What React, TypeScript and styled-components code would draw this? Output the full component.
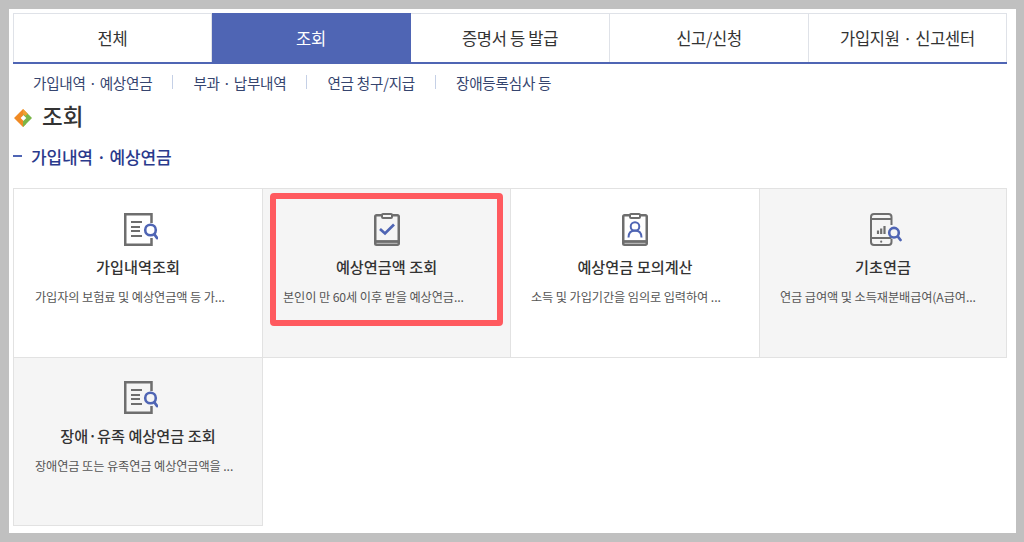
import React from "react";
import styled, { createGlobalStyle } from "styled-components";

const Global = createGlobalStyle`
  html, body { margin: 0; padding: 0; background: #fff; }
  body { font-family: "Noto Sans CJK KR", "Noto Sans", sans-serif; }
  * { box-sizing: border-box; }
`;

const Frame = styled.div`
  width: 1024px;
  height: 542px;
  border-style: solid;
  border-color: #c0c0c0;
  border-width: 9px 8px 9px 9px;
  background: #fff;
  padding: 4px 9px 0 4px;
  overflow: hidden;
  position: relative;
`;

const Tabs = styled.nav`
  display: grid;
  grid-template-columns: 199px 199px 199px 199px 198px;
  height: 51px;
  border-bottom: 2px solid #4f65b4;
`;

const Tab = styled.div<{ $active?: boolean; $first?: boolean }>`
  display: flex;
  align-items: center;
  justify-content: center;
  font-size: 16.5px;
  letter-spacing: -0.3px;
  color: ${(p) => (p.$active ? "#fff" : "#333")};
  background: ${(p) => (p.$active ? "#4f65b4" : "#fff")};
  border: 1px solid ${(p) => (p.$active ? "#4f65b4" : "#dfe2e8")};
  border-bottom: none;
  border-left-width: ${(p) => (p.$first ? 1 : 0)}px;
`;

const SubNav = styled.ul`
  display: flex;
  align-items: center;
  list-style: none;
  margin: 0;
  padding: 0 0 0 20px;
  height: 36px;
`;

const SubItem = styled.li`
  font-size: 14.6px;
  letter-spacing: -0.25px;
  color: #36456f;
  display: flex;
  align-items: center;
  white-space: nowrap;
  & + &::before {
    content: "";
    width: 1px;
    height: 14px;
    background: #c5d0e6;
    margin: 0 20px;
  }
`;

const Title = styled.h1`
  display: flex;
  align-items: center;
  gap: 10px;
  margin: 2px 0 0;
  padding-left: 1px;
  height: 27px;
  font-size: 22.5px;
  font-weight: 500;
  color: #333;
  line-height: 1;
`;

const DiamondSvg = styled.svg`
  margin-top: 5px;
`;

const Section = styled.h2`
  display: flex;
  align-items: center;
  gap: 9px;
  margin: 12px 0 0;
  height: 30px;
  font-size: 17px;
  font-weight: 500;
  letter-spacing: -0.2px;
  color: #2a3a8c;
  &::before {
    content: "";
    width: 9px;
    height: 2px;
    background: #4f65b4;
  }
`;

const Grid = styled.div`
  display: grid;
  grid-template-columns: 249px 248px 249px 247px;
  grid-auto-rows: 168.5px;
  width: 994px;
  margin-top: 17px;
  border-top: 1px solid #e2e2e2;
  border-left: 1px solid #e2e2e2;
`;

const Card = styled.article<{ $shaded?: boolean }>`
  display: flex;
  flex-direction: column;
  align-items: center;
  padding: 22px 0 0;
  background: ${(p) => (p.$shaded ? "#f5f5f5" : "#fff")};
  border-right: 1px solid #e2e2e2;
  border-bottom: 1px solid #e2e2e2;
`;

const IconWrap = styled.div`
  width: 40px;
  height: 36px;
  display: flex;
  align-items: center;
  justify-content: center;
`;

const CardTitle = styled.h3`
  margin: 9px 0 0;
  font-size: 15.2px;
  font-weight: 500;
  line-height: 20px;
  color: #333;
  white-space: nowrap;
`;

const CardText = styled.p`
  align-self: flex-start;
  margin: 13px 0 0;
  padding-left: 20px;
  font-size: 12.2px;
  line-height: 16px;
  letter-spacing: -0.1px;
  color: #555;
  white-space: nowrap;
  ${Card}:nth-child(4n + 1) & {
    padding-left: 21px;
  }
`;

const Highlight = styled.div`
  position: absolute;
  left: 261px;
  top: 184px;
  width: 233px;
  height: 133px;
  border: 6px solid #ff5a5f;
  border-radius: 4px;
  pointer-events: none;
`;

const DocSvg = styled.svg`
  margin-left: 6px;
  flex: none;
`;

const PhoneSvg = styled.svg`
  margin-left: 5px;
  flex: none;
`;

const GRAY = "#6e6e6e";
const BLUE = "#4f65b4";

const DocSearch = () => (
  <DocSvg width="34" height="33" viewBox="0 0 34 33" fill="none">
    <path d="M27.500 10V1.250H1.250V31.750H27.500V25" stroke={GRAY} strokeWidth="2.500" />
    <path d="M7 9h11M7 14h9M7 18h9M7 23h11" stroke={GRAY} strokeWidth="2.200" />
    <circle cx="26.500" cy="17" r="5.300" stroke={BLUE} strokeWidth="2.600" />
    <path d="M30.500 21.500l2.500 3.500" stroke={BLUE} strokeWidth="2.800" strokeLinecap="round" />
  </DocSvg>
);

const Board = ({ children }: { children: React.ReactNode }) => (
  <svg width="26" height="33" viewBox="0 0 26 33" fill="none">
    <path d="M8 2.250H2.500a1.250 1.250 0 0 0-1.250 1.250V30.500a1.250 1.250 0 0 0 1.250 1.250h21a1.250 1.250 0 0 0 1.250-1.250V3.500a1.250 1.250 0 0 0-1.250-1.250H18" stroke={GRAY} strokeWidth="2.500" />
    <rect x="8" y="1" width="10" height="4" rx="1" stroke={GRAY} strokeWidth="2" />
    <path d="M1 28.500h24" stroke={GRAY} strokeWidth="2.800" />
    {children}
  </svg>
);

const Check = () => (
  <Board>
    <path d="M6 16l5 4.500 9-9" stroke={BLUE} strokeWidth="2.700" />
  </Board>
);

const Person = () => (
  <Board>
    <circle cx="13" cy="13.500" r="4.300" stroke={BLUE} strokeWidth="2" />
    <path d="M6.500 24.500c0-4.500 2-7 6.500-7s6.500 2.500 6.500 7" stroke={BLUE} strokeWidth="2" />
  </Board>
);

const Phone = () => (
  <PhoneSvg width="32" height="33" viewBox="0 0 32 33" fill="none">
    <path d="M21.500 12V4a3 3 0 0 0-3-3H4a3 3 0 0 0-3 3v25a3 3 0 0 0 3 3h14.500a3 3 0 0 0 3-3v-3" stroke={GRAY} strokeWidth="2" />
    <path d="M1 6h20.500M1 25h20.500" stroke={GRAY} strokeWidth="1.800" />
    <path d="M8 21v-3.500M11.200 21v-5.500M14.500 21v-8" stroke={GRAY} strokeWidth="2.200" />
    <circle cx="11.200" cy="28.700" r="1.100" fill={GRAY} />
    <circle cx="24" cy="19.700" r="4.800" stroke={BLUE} strokeWidth="2.600" />
    <path d="M27.800 23.500l2.700 3.500" stroke={BLUE} strokeWidth="2.800" strokeLinecap="round" />
  </PhoneSvg>
);

const Diamond = () => (
  <DiamondSvg width="18" height="18" viewBox="0 0 19 19">
    <path d="M9.500 0L0 9.500 9.500 19l3.500-3.500-6-6L13 3.500z" fill="#f08a24" />
    <path d="M13 3.500L19 9.500 9.500 19V13L13 9.500 9.500 6z" fill="#7ab648" />
    <path d="M9.500 0L14.500 5 12 7.500 9.500 5z" fill="#f0a030" />
  </DiamondSvg>
);

const tabs = ["전체", "조회", "증명서 등 발급", "신고/신청", "가입지원 · 신고센터"];
const subs = ["가입내역 · 예상연금", "부과 · 납부내역", "연금 청구/지급", "장애등록심사 등"];
const cards = [
  { icon: <DocSearch />, title: "가입내역조회", text: "가입자의 보험료 및 예상연금액 등 가..." },
  { icon: <Check />, title: "예상연금액 조회", text: "본인이 만 60세 이후 받을 예상연금...", shaded: true },
  { icon: <Person />, title: "예상연금 모의계산", text: "소득 및 가입기간을 임의로 입력하여 ..." },
  { icon: <Phone />, title: "기초연금", text: "연금 급여액 및 소득재분배급여(A급여...", shaded: true },
  { icon: <DocSearch />, title: "장애·유족 예상연금 조회", text: "장애연금 또는 유족연금 예상연금액을 ...", shaded: true },
];

export default function App() {
  return (
    <>
      <Global />
      <Frame>
        <Tabs>
          {tabs.map((t, i) => (
            <Tab key={t} $active={i === 1} $first={i === 0}>
              {t}
            </Tab>
          ))}
        </Tabs>
        <SubNav>
          {subs.map((s) => (
            <SubItem key={s}>{s}</SubItem>
          ))}
        </SubNav>
        <Title>
          <Diamond />
          조회
        </Title>
        <Section>가입내역 · 예상연금</Section>
        <Grid>
          {cards.map((c) => (
            <Card key={c.title} $shaded={c.shaded}>
              <IconWrap>{c.icon}</IconWrap>
              <CardTitle>{c.title}</CardTitle>
              <CardText>{c.text}</CardText>
            </Card>
          ))}
        </Grid>
        <Highlight />
      </Frame>
    </>
  );
}
